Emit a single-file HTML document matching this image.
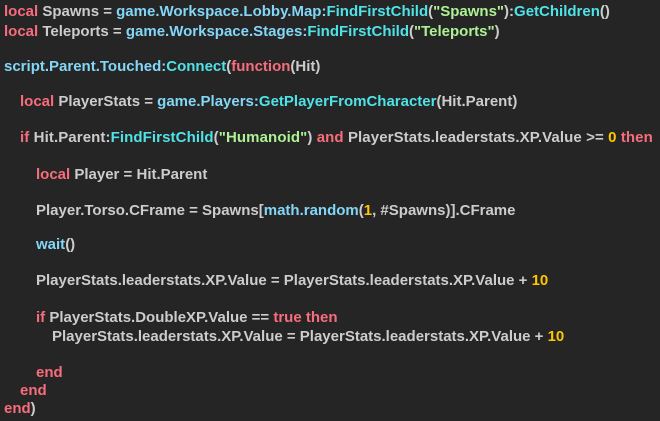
<!DOCTYPE html>
<html><head><style>
body{margin:0;width:660px;height:421px;background:#252525;overflow:hidden;font:bold 15px "Liberation Sans",Arial,sans-serif;color:#cccccc}
.l{position:absolute;white-space:pre;line-height:16px;margin-top:1px}
.k{color:#f86d7c}.b{color:#84d6f7}.m{color:#4fe3e8}.s{color:#adf195}.n{color:#ffc600}
</style></head><body>
<div class="l" style="left:4px;top:3px"><span class="k">local</span> Spawns = <span class="b">game.Workspace.Lobby.Map:</span><span class="m">FindFirstChild</span>(<span class="s">"Spawns"</span>):<span class="m">GetChildren</span>()</div>
<div class="l" style="left:4px;top:23px"><span class="k">local</span> Teleports = <span class="b">game.Workspace.Stages:</span><span class="m">FindFirstChild</span>(<span class="s">"Teleports"</span>)</div>
<div class="l" style="left:4px;top:58px"><span class="b">script.Parent.Touched:</span><span class="m">Connect</span>(<span class="k">function</span>(Hit)</div>
<div class="l" style="left:20px;top:93px"><span class="k">local</span> PlayerStats = <span class="b">game.Players:</span><span class="m">GetPlayerFromCharacter</span>(Hit.Parent)</div>
<div class="l" style="left:20px;top:129px;letter-spacing:0.1px"><span class="k">if</span> Hit.Parent:<span class="m">FindFirstChild</span>(<span class="s">"Humanoid"</span>) <span class="k">and</span> PlayerStats.leaderstats.XP.Value &gt;= <span class="n">0</span> <span class="k">then</span></div>
<div class="l" style="left:36px;top:166px"><span class="k">local</span> Player = Hit.Parent</div>
<div class="l" style="left:36px;top:202px">Player.Torso.CFrame = Spawns[<span class="b">math.random</span>(<span class="n">1</span>, #Spawns)].CFrame</div>
<div class="l" style="left:36px;top:236px"><span class="b">wait</span>()</div>
<div class="l" style="left:36px;top:272px">PlayerStats.leaderstats.XP.Value = PlayerStats.leaderstats.XP.Value + <span class="n">10</span></div>
<div class="l" style="left:36px;top:309px"><span class="k">if</span> PlayerStats.DoubleXP.Value == <span class="k">true</span> <span class="k">then</span></div>
<div class="l" style="left:52px;top:328px">PlayerStats.leaderstats.XP.Value = PlayerStats.leaderstats.XP.Value + <span class="n">10</span></div>
<div class="l" style="left:36px;top:364px"><span class="k">end</span></div>
<div class="l" style="left:20px;top:382px"><span class="k">end</span></div>
<div class="l" style="left:4px;top:400px"><span class="k">end</span>)</div>
</body></html>
